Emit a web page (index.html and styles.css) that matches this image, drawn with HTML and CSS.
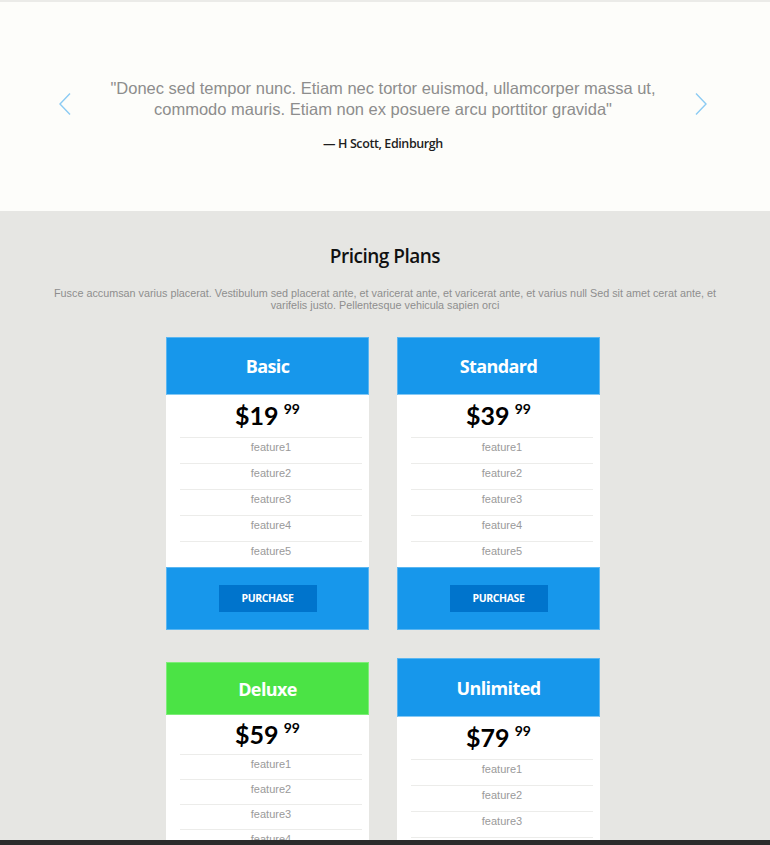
FILE: index.html
```html
<!DOCTYPE html>
<html>
<head>
<meta charset="utf-8">
<link rel="stylesheet" href="styles.css">
</head>
<body>
<section class="testimonial">
  <div class="slider">
    <span class="arrow">
      <svg width="14" height="24" viewBox="0 0 14 24"><path d="M12 1.5 L2 12 L12 22.5" fill="none" stroke="#8ccbf3" stroke-width="1.4"/></svg>
    </span>
    <div class="quote">
      <p class="quote-text">"Donec sed tempor nunc. Etiam nec tortor euismod, ullamcorper massa ut, commodo mauris. Etiam non ex posuere arcu porttitor gravida"</p>
      <p class="author">— H Scott, Edinburgh</p>
    </div>
    <span class="arrow">
      <svg width="14" height="24" viewBox="0 0 14 24"><path d="M2 1.5 L12 12 L2 22.5" fill="none" stroke="#8ccbf3" stroke-width="1.4"/></svg>
    </span>
  </div>
</section>
<section class="pricing">
  <h2 class="title">Pricing Plans</h2>
  <p class="intro">Fusce accumsan varius placerat. Vestibulum sed placerat ante, et varicerat ante, et varicerat ante, et varius null Sed sit amet cerat ante, et<br>varifelis justo. Pellentesque vehicula sapien orci</p>
  <div class="plans">
    <div class="plan">
      <div class="plan-head">Basic</div>
      <div class="price">$19<sup>99</sup></div>
      <ul class="features">
        <li>feature1</li><li>feature2</li><li>feature3</li><li>feature4</li><li>feature5</li>
      </ul>
      <div class="plan-foot"><span class="btn">PURCHASE</span></div>
    </div>
    <div class="plan">
      <div class="plan-head">Standard</div>
      <div class="price">$39<sup>99</sup></div>
      <ul class="features">
        <li>feature1</li><li>feature2</li><li>feature3</li><li>feature4</li><li>feature5</li>
      </ul>
      <div class="plan-foot"><span class="btn">PURCHASE</span></div>
    </div>
    <div class="plan plan-compact">
      <div class="plan-head plan-head-green">Deluxe</div>
      <div class="price">$59<sup>99</sup></div>
      <ul class="features">
        <li>feature1</li><li>feature2</li><li>feature3</li><li>feature4</li><li>feature5</li>
      </ul>
      <div class="plan-foot"><span class="btn">PURCHASE</span></div>
    </div>
    <div class="plan">
      <div class="plan-head plan-head-tall">Unlimited</div>
      <div class="price">$79<sup>99</sup></div>
      <ul class="features">
        <li>feature1</li><li>feature2</li><li>feature3</li><li>feature4</li><li>feature5</li>
      </ul>
      <div class="plan-foot"><span class="btn">PURCHASE</span></div>
    </div>
  </div>
</section>
<div class="bottom-bar"></div>
</body>
</html>
```
FILE: styles.css
```css
html, body {
  margin: 0;
  padding: 0;
}
body {
  background: #e6e6e3;
  font-family: "Liberation Sans", Arial, sans-serif;
  height: 845px;
  overflow: hidden;
}
.testimonial {
  background: #fdfdfa;
  border-top: 2px solid #ebebe8;
  height: 209px;
  box-sizing: content-box;
}
.slider {
  display: flex;
  align-items: flex-start;
  padding: 76px 0 0 58px;
}
.arrow {
  display: block;
  width: 14px;
  height: 24px;
  margin-top: 14px;
}
.arrow svg { display: block; }
.quote {
  width: 622px;
  text-align: center;
}
.quote-text {
  margin: 0 auto;
  width: 590px;
  font-size: 16.5px;
  line-height: 21px;
  color: #8d8d8d;
  letter-spacing: 0;
}
.author {
  margin: 15px 0 0;
  font-family: "Open Sans", sans-serif;
  font-weight: 600;
  font-size: 12.5px;
  color: #1e1e1e;
  letter-spacing: -0.4px;
}
.pricing {
  padding-top: 32px;
  text-align: center;
}
.title {
  margin: 0;
  font-family: "Open Sans", sans-serif;
  font-weight: 600;
  font-size: 19px;
  line-height: 26px;
  color: #111;
  letter-spacing: -0.5px;
}
.intro {
  margin: 18px auto 0;
  width: 700px;
  font-size: 10.8px;
  line-height: 12px;
  color: #8e8e8e;
  letter-spacing: 0;
}
.plans {
  display: grid;
  grid-template-columns: 203px 203px;
  column-gap: 28px;
  row-gap: 28px;
  justify-content: center;
  align-items: start;
  margin-top: 26px;
  padding-right: 4px;
}
.plan {
  background: #fff;
}
.plan-head {
  background: #1797eb;
  border: 1px solid #5ab6f1;
  border-bottom-color: #86c9f4;
  height: 56px;
  display: flex;
  align-items: center;
  justify-content: center;
  font-family: "Open Sans", sans-serif;
  font-weight: 700;
  font-size: 18px;
  color: #fff;
  letter-spacing: -0.6px;
}
.plan-head-green {
  background: #4be345;
  border-color: #7ded78;
  height: 51px;
}
.plan-head-tall {
  height: 57px;
}
.price {
  height: 42px;
  display: flex;
  align-items: flex-start;
  justify-content: center;
  padding-top: 4px;
  box-sizing: border-box;
  font-family: Lato, sans-serif;
  font-weight: 700;
  font-size: 25px;
  line-height: 32px;
  color: #000;
}
.price sup {
  font-size: 14px;
  line-height: 14px;
  margin-left: 5px;
  margin-top: 3px;
}
.features {
  list-style: none;
  margin: 0 7px 0 14px;
  padding: 0;
}
.features li {
  border-top: 1px solid #ececea;
  height: 25px;
  line-height: 18px;
  font-size: 11px;
  color: #9a9a9a;
}
.plan-compact .price {
  height: 39px;
  padding-top: 3px;
}
.plan-compact {
  margin-top: 4px;
}
.plan-compact .features li {
  height: 24px;
  line-height: 18px;
}
.plan-foot {
  background: #1797eb;
  border: 1px solid #5ab6f1;
  height: 61px;
  display: flex;
  align-items: flex-start;
  justify-content: center;
}
.btn {
  display: block;
  margin-top: 17px;
  width: 98px;
  height: 27px;
  line-height: 27px;
  background: #0074cc;
  color: #fff;
  font-family: "Open Sans", sans-serif;
  font-weight: 700;
  font-size: 10.5px;
  letter-spacing: -0.4px;
}
.bottom-bar {
  position: fixed;
  left: 0;
  right: 0;
  bottom: 0;
  height: 5px;
  background: #2b2b2b;
}
```
